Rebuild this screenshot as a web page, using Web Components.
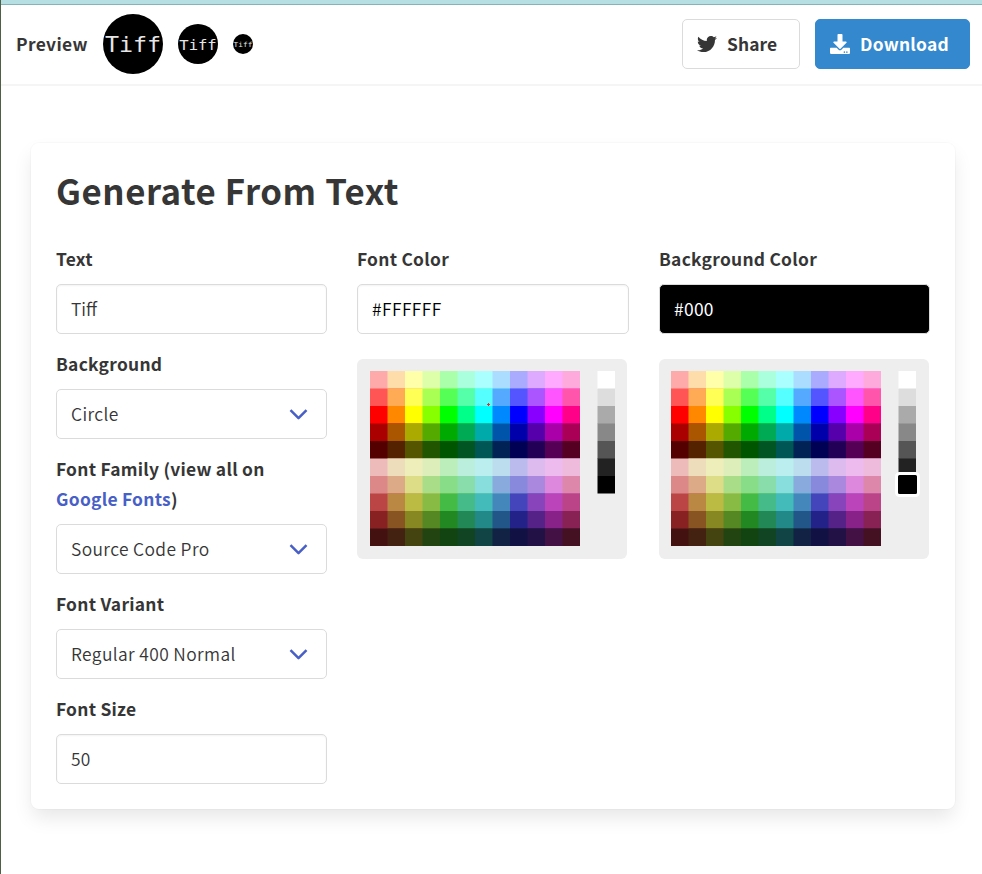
<!DOCTYPE html>
<html lang="en"><head><meta charset="utf-8"><title>Generate From Text</title>
<style>
html,body{margin:0;height:100%;background:#fff}
body{font-family:"Noto Sans CJK SC","Noto Sans",sans-serif;font-size:17.4px;line-height:30px;color:#363636;overflow:hidden}
</style></head><body>
<favicon-page></favicon-page>
<script>
const define=(name,css,html)=>customElements.define(name,class extends HTMLElement{
  connectedCallback(){
    if(this.shadowRoot)return;
    const r=this.attachShadow({mode:'open'});
    r.innerHTML='<style>*{box-sizing:border-box}:host{display:block;box-sizing:border-box}'+css+'</style>'+(typeof html==='function'?html(this):html);
  }
});
define('icon-preview',':host{flex:none}svg{display:block}text{font-family:"DejaVu Sans Mono","Liberation Mono",monospace;fill:#e6e6e6}',
 e=>{const s=+e.getAttribute('size');return `<svg width="${s}" height="${s}" viewBox="0 0 128 128"><circle cx="64" cy="64" r="64"/><text x="64" y="91" font-size="49.8" text-anchor="middle" transform="scale(1 .9)">Tiff</text></svg>`});
define('action-button',
 ':host{display:flex;align-items:center;gap:10px;height:50px;padding:0 20px 0 14px;border:1px solid #dbdbdb;border-radius:5px;font-weight:700;letter-spacing:.1px;width:118px;background:#fff}:host([primary]){width:155px;background:#3488ce;border-color:#3488ce;color:#fff;letter-spacing:.25px}span{white-space:nowrap}::slotted(svg){display:block;flex:none}',
 '<slot name="icon"></slot><span><slot></slot></span>');
define('preview-bar',
 ':host{display:flex;align-items:center;height:79px;padding:0 12px 2px 15px;box-shadow:0 2px 0 #f5f5f5;gap:15px}b{width:72px;white-space:nowrap;letter-spacing:.35px}.grow{flex:1}',
 `<b>Preview</b><icon-preview size="60"></icon-preview><icon-preview size="40"></icon-preview><icon-preview size="20"></icon-preview><div class="grow"></div>
 <action-button><svg slot="icon" width="20" height="20" viewBox="0 0 512 512" fill="#363636"><path d="M459.37 151.716c.325 4.548.325 9.097.325 13.645 0 138.72-105.583 298.558-298.558 298.558-59.452 0-114.68-17.219-161.137-47.106 8.447.974 16.568 1.299 25.34 1.299 49.055 0 94.213-16.568 130.274-44.832-46.132-.975-84.792-31.188-98.112-72.772 6.498.974 12.995 1.624 19.818 1.624 9.421 0 18.843-1.3 27.614-3.573-48.081-9.747-84.143-51.98-84.143-102.985v-1.299c13.969 7.797 30.214 12.67 47.431 13.319-28.264-18.843-46.781-51.005-46.781-87.391 0-19.492 5.197-37.36 14.294-52.954 51.655 63.675 129.3 105.258 216.365 109.807-1.624-7.797-2.599-15.918-2.599-24.04 0-57.828 46.782-104.934 104.934-104.934 30.213 0 57.502 12.67 76.67 33.137 23.715-4.548 46.456-13.32 66.599-25.34-7.798 24.366-24.366 44.833-46.132 57.827 21.117-2.273 41.584-8.122 60.426-16.243-14.292 20.791-32.161 39.308-52.628 54.253z"/></svg>Share</action-button>
 <action-button primary><svg slot="icon" width="20" height="20" viewBox="0 0 512 512" fill="#fff"><path d="M216 0h80c13.3 0 24 10.700 24 24v168h87.700c17.800 0 26.700 21.500 14.100 34.100L269.700 378.300c-7.500 7.500-19.800 7.500-27.300 0L90.100 226.100c-12.600-12.600-3.700-34.100 14.100-34.100H192V24c0-13.300 10.700-24 24-24zm296 376v112c0 13.300-10.700 24-24 24H24c-13.300 0-24-10.700-24-24V376c0-13.300 10.700-24 24-24h146.700l49 49c20.100 20.100 52.500 20.100 72.600 0l49-49H488c13.300 0 24 10.700 24 24zm-124 88c0-11-9-20-20-20s-20 9-20 20 9 20 20 20 20-9 20-20zm64 0c0-11-9-20-20-20s-20 9-20 20 9 20 20 20 20-9 20-20z"/></svg>Download</action-button>`);
define('form-field',
 'label{display:block;font-weight:700;margin-bottom:10px;letter-spacing:.26px}::slotted(a){color:#485fc7;text-decoration:none}',
 '<label><slot name="label"></slot></label><slot></slot>');
define('text-box',
 ':host{height:50px;border:1px solid #dbdbdb;border-radius:5px;padding:9px 14px;box-shadow:inset 0 1px 2px rgba(10,10,10,.05);white-space:nowrap;font-weight:350;letter-spacing:.3px}:host([plain]){letter-spacing:0}:host([bright]){color:#000;letter-spacing:.45px;width:272px}:host([dark]){background:#000;color:#fff;font-weight:400}',
 '<slot></slot>');
define('select-box',
 ':host{display:flex;align-items:center;justify-content:space-between;height:50px;border:1px solid #dbdbdb;border-radius:5px;padding:0 18px 0 14px;white-space:nowrap;font-weight:350;letter-spacing:.38px}svg{display:block}',
 '<span><slot></slot></span><svg width="19" height="12" viewBox="0 0 19 12" fill="none" stroke="#485fc7" stroke-width="2.5" stroke-linejoin="round"><path d="M1.500 2.200l8 8L17.500 2.200"/></svg>');
const rows=['FAA FDA FFA DFA AFA AFD AFF ADF AAF DAF FAF FAD','F55 FA5 FF5 AF5 5F5 5FA 5FF 5AF 55F A5F F5F F5A','F00 F80 FF0 8F0 0F0 0F8 0FF 08F 00F 80F F0F F08','A00 A50 AA0 5A0 0A0 0A5 0AA 05A 00A 50A A0A A05','500 520 550 250 050 052 055 025 005 205 505 502','EBB EDB EEB DEB BEB BED BEE BDE BBE DBE EBE EBD','D88 DA8 DD8 AD8 8D8 8DA 8DD 8AD 88D A8D D8D D8A','B44 B84 BB4 8B4 4B4 4B8 4BB 48B 44B 84B B4B B48','822 852 882 582 282 285 288 258 228 528 828 825','411 421 441 241 141 142 144 124 114 214 414 412'];
define('color-picker',':host{width:270px;height:200px;margin-top:25px;background:#eee;border-radius:6px}svg{display:block}',
 e=>{const u=17.5,x0=+e.getAttribute('inset'),y0=12,g=x0+227.500;
  // cells reach past their own edge so that each later one covers the seam
  const cell=(x,y,c,right,bottom)=>`<rect x="${x}" y="${y}" width="${right-x}" height="${bottom-y}" fill="#${c}"/>`;
  let s='';
  rows.forEach((r,j)=>r.split(' ').forEach((c,i)=>s+=cell(x0+i*u,y0+j*u,c,x0+Math.min(12,i+2)*u,y0+(j+1)*u+(j%2?0:.5))));
  'FFF DDD AAA 888 555 222 000'.split(' ').forEach((c,j)=>s+=cell(g,y0+j*u,c,g+u,y0+(j+1)*u+(j%2||j===6?0:.5)));
  if(e.hasAttribute('selected'))s+=`<rect x="${g-2}" y="${y0+6*u-2.500}" width="22" height="22" rx="3" fill="#000" stroke="#fff" stroke-width="3"/>`;
  if(e.hasAttribute('marker'))s+='<path d="M130 45.500h3M131.500 44v3" stroke="#f22" stroke-width="1"/>';
  return `<svg width="270" height="200">${s}</svg>`});
define('text-generator',
 ':host{width:924px;height:666px;padding:25px 25px 25px;background:#fff;border-radius:8px;box-shadow:0 10px 20px -2.5px rgba(10,10,10,.1),0 0 0 1px rgba(10,10,10,.02)}h1{margin:0 0 31px;font-size:34.8px;line-height:45px;font-weight:700;white-space:nowrap;letter-spacing:.56px}.cols{display:grid;grid-template-columns:271px 272px 271px;column-gap:30px}.stack{display:flex;flex-direction:column;gap:15px}',
 `<h1>Generate From Text</h1><div class="cols"><div class="stack">
 <form-field><span slot="label">Text</span><text-box plain>Tiff</text-box></form-field>
 <form-field><span slot="label">Background</span><select-box>Circle</select-box></form-field>
 <form-field><span slot="label">Font Family (view all on<br></span><a slot="label">Google Fonts</a><span slot="label">)</span><select-box>Source Code Pro</select-box></form-field>
 <form-field><span slot="label">Font Variant</span><select-box>Regular 400 Normal</select-box></form-field>
 <form-field><span slot="label">Font Size</span><text-box>50</text-box></form-field></div>
 <div><form-field><span slot="label">Font Color</span><text-box bright>#FFFFFF</text-box></form-field><color-picker inset="13" marker></color-picker></div>
 <div><form-field><span slot="label">Background Color</span><text-box dark>#000</text-box></form-field><color-picker inset="12" selected></color-picker></div></div>`);
define('favicon-page',
 ':host{height:100vh;border-left:1px solid #4e5f46}.strip{height:5px;background:#b5dfe3;border-bottom:1px solid #86b3b7}main{padding:59px 0 0 30px}',
 '<div class="strip"></div><preview-bar></preview-bar><main><text-generator></text-generator></main>');
</script></body></html>
